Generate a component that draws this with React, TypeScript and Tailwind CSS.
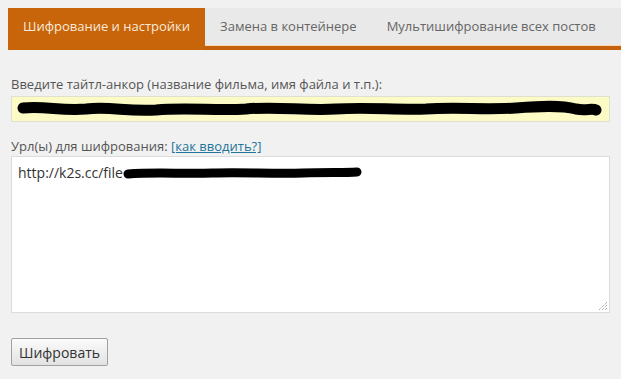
import React from 'react';

const TABS = ['Шифрование и настройки', 'Замена в контейнере', 'Мультишифрование всех постов'];

function Scribble({ width, height, d, stroke }: { width: number; height: number; d: string; stroke: number }) {
  return (
    <svg width={width} height={height} viewBox={`0 0 ${width} ${height}`} className="block">
      <path d={d} fill="none" stroke="#000" strokeWidth={stroke} strokeLinecap="round" strokeLinejoin="round" />
    </svg>
  );
}

export default function App() {
  return (
    <div className="min-h-[379px] w-[621px] bg-[#f1f1f1] text-[13px] text-[#555] font-['Open_Sans',sans-serif]">
      {/* tabs */}
      <div className="pl-2 pt-2">
        <div className="flex border-b-4 border-[#c5610c]">
          <div className="-mb-1 flex h-[42px] items-center bg-[#c8640a] px-[15px] pb-1 text-[#f7ead8]">
            {TABS[0]}
          </div>
          <div className="flex flex-1 border-b border-[#fbd9b0] bg-[#e9e9e9]">
            <div className="flex h-[37px] items-center px-[15px] text-[#666]">{TABS[1]}</div>
            <div className="flex h-[37px] items-center px-[15px] text-[#666]">{TABS[2]}</div>
          </div>
        </div>
      </div>

      <div className="px-[11px] pt-[25px]">
        <div className="leading-[18px]">Введите тайтл-анкор (название фильма, имя файла и т.п.):</div>
        <div className="mt-[3px] flex h-[26px] w-[599px] items-center border border-[#e0e0d0] bg-[#fcfbc6] pl-[4px]">
          <Scribble
            width={590}
            height={22}
            stroke={11}
            d="M7 10 C30 8 45 13 70 11 C95 8 110 14 140 12 C170 9 200 13 230 11 C260 8 290 13 320 11 C350 9 380 12 410 11 C440 9 470 12 500 10 C525 8 545 7 560 11 C570 13 576 10 580 12"
          />
        </div>

        <div className="mt-[15px] leading-[18px]">
          Урл(ы) для шифрования:{' '}
          <a href="#" className="text-[#21759b] underline">[как вводить?]</a>
        </div>
        <div className="relative mt-[1px] h-[157px] w-[599px] border border-[#dcdcdc] bg-white">
          <div className="flex items-center pl-[6px] pt-[5px] text-[14px] text-[#333]">
            <span>http://k2s.cc/file</span>
            <Scribble
              width={240}
              height={16}
              stroke={9}
              d="M5 9 C30 7 60 9 90 8 C120 7 150 9 180 8 C205 7 220 8 234 7"
            />
          </div>
          <svg width="10" height="10" viewBox="0 0 10 10" className="absolute right-[1px] bottom-[1px]">
            <path d="M9 1 L1 9 M9 4 L4 9 M9 7 L7 9" stroke="#888" strokeWidth="1" strokeDasharray="1 1" />
          </svg>
        </div>

        <div className="pt-[25px]">
          <button className="h-[28px] rounded-[2px] border border-[#a0a0a0] bg-gradient-to-b from-[#fbfbfb] to-[#e2e2e2] px-[7px] text-[14px] text-[#333] font-['Open_Sans',sans-serif]">
            Шифровать
          </button>
        </div>
      </div>
    </div>
  );
}
